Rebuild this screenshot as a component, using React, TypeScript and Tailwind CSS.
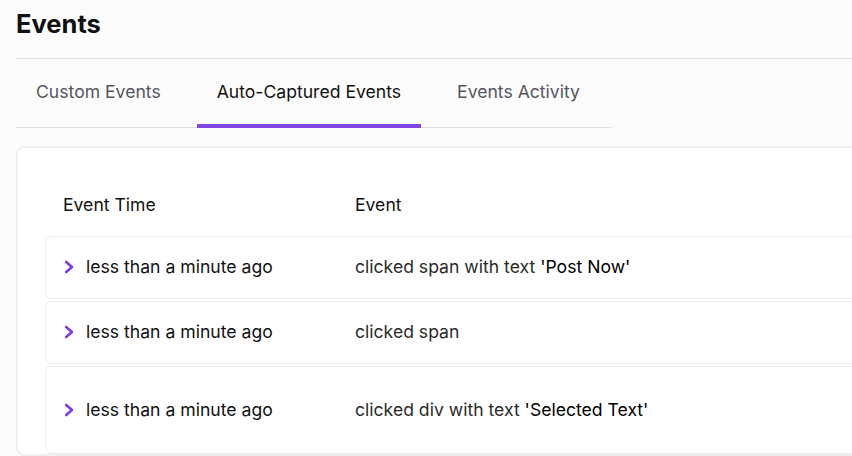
const tabs = ["Custom Events", "Auto-Captured Events", "Events Activity"];

const rows = [
  { time: "less than a minute ago", action: "clicked span with text ", target: "'Post Now'", tall: false },
  { time: "less than a minute ago", action: "clicked span", target: "", tall: false },
  { time: "less than a minute ago", action: "clicked div with text ", target: "'Selected Text'", tall: true },
];

const Chevron = () => (
  <svg width="11" height="14" viewBox="0 0 11 14" fill="none" className="shrink-0">
    <path d="M2.2 2L8 7L2.2 12" stroke="#7c3aed" strokeWidth="2.6" strokeLinecap="round" strokeLinejoin="round" />
  </svg>
);

const App: React.FC = () => {
  return (
    <div className="min-h-screen w-full overflow-hidden bg-[#fcfcfc] pl-4 font-['Inter',sans-serif] text-[#111]">
      <div className="border-b border-[#e2e2e2] pt-2 pb-[18px]">
        <h1 className="text-[25.5px] leading-8 font-bold">Events</h1>
      </div>

      <div className="flex w-[596px] gap-4 border-b border-[#e0e0e0]">
        {tabs.map((tab, i) => (
          <button
            key={tab}
            className={
              i === 1
                ? "-mb-px h-[69px] border-b-4 border-[#8247e5] px-5 pt-px text-[17.6px] text-[#111]"
                : "-mb-px h-[69px] border-b-4 border-transparent px-5 pt-px text-[17.6px] text-[#55555e]"
            }
          >
            {tab}
          </button>
        ))}
      </div>

      <div className="mt-[18px] w-[900px] rounded-lg border-2 border-[#efefef] bg-white pt-6 pl-[27px]">
        <div className="flex h-16 items-center pt-0.5 pl-[18px] text-[17.6px]">
          <div className="w-[292px]">Event Time</div>
          <div>Event</div>
        </div>

        <div className="flex flex-col gap-0.5">
          {rows.map((row, i) => (
            <div
              key={i}
              className={
                row.tall
                  ? "flex h-[88px] items-center rounded-md border border-[#eeeeee] bg-white pl-[18px] text-[17.6px]"
                  : "flex h-[63px] items-center rounded-md border border-[#eeeeee] bg-white pl-[18px] text-[17.6px]"
              }
            >
              <div className="flex w-[291px] items-center gap-[11px]">
                <Chevron />
                <span>{row.time}</span>
              </div>
              <div className="text-[#2a2a2a]">
                {row.action}
                {row.target && <span className="text-black">{row.target}</span>}
              </div>
            </div>
          ))}
        </div>
      </div>
    </div>
  );
};

export default App;
